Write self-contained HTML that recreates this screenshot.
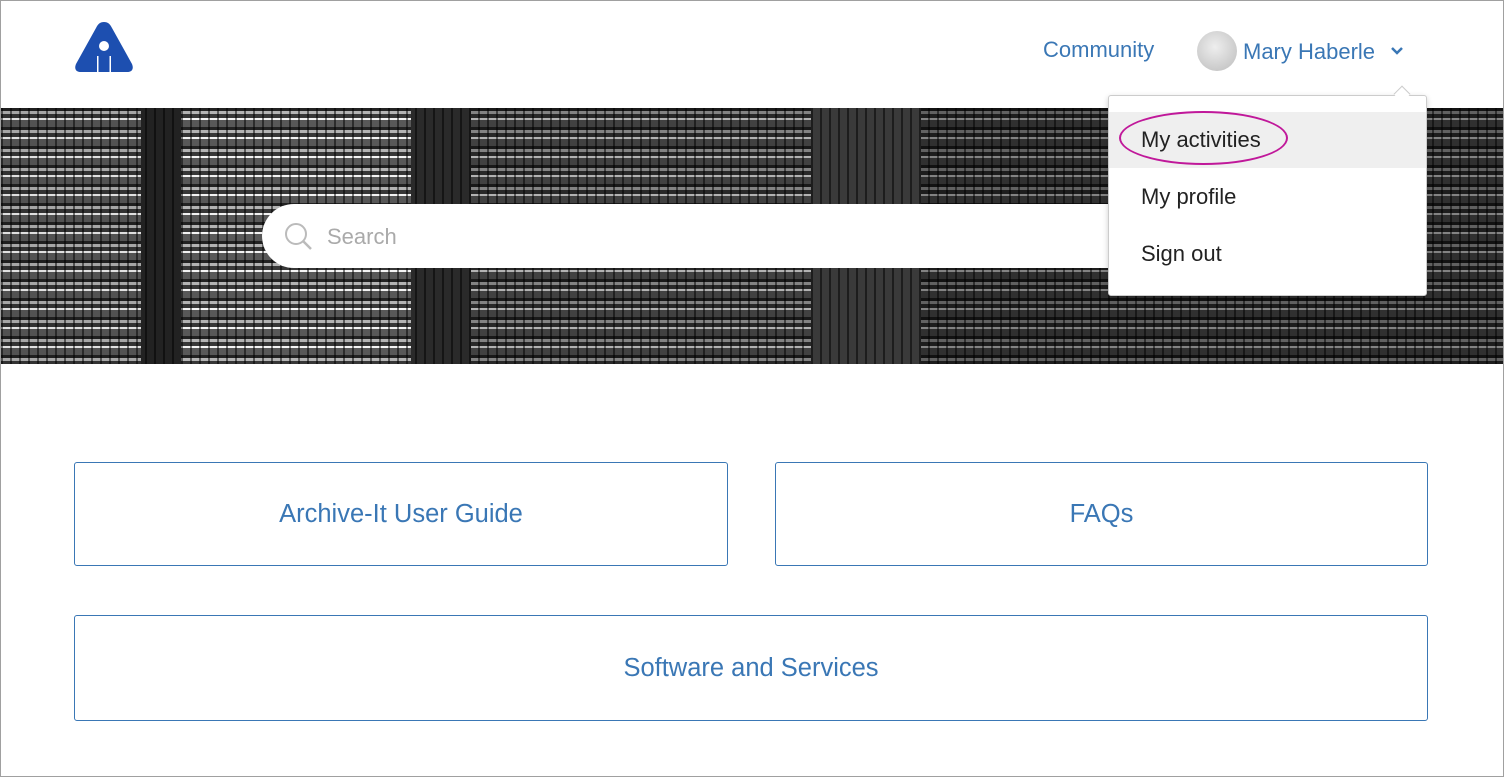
<!DOCTYPE html>
<html><head><style>
*{margin:0;padding:0;box-sizing:border-box}
body{width:1504px;height:777px;background:#fff;font-family:"Liberation Sans",Arial,sans-serif;position:relative;overflow:hidden}
.frame{position:absolute;left:0;top:0;width:1504px;height:777px;border:1px solid #a0a0a0;pointer-events:none;z-index:10}
.hero{position:absolute;left:1px;top:108px;width:1502px;height:256px;background:#333;overflow:hidden}
.col{position:absolute;top:0;height:256px}
.rows{background:repeating-linear-gradient(180deg,#1a1a1a 0 3px,#8a8a8a 3px 6px,#2a2a2a 6px 10px,#bbb 10px 12px,#444 12px 19px),#555}
.cells{background:repeating-linear-gradient(90deg,rgba(0,0,0,.5) 0 2px,transparent 2px 9px)}
.search{position:absolute;left:262px;top:204px;width:980px;height:64px;background:#fff;border-radius:32px 0 0 32px}
.search span{position:absolute;left:65px;top:20px;font-size:22px;color:#aaa}
.nav{position:absolute;top:37px;font-size:22px;color:#3a77b5}
.dd{position:absolute;left:1108px;top:95px;width:319px;height:201px;background:#fff;border:1px solid #ccc;border-radius:3px;box-shadow:0 2px 6px rgba(0,0,0,.2)}
.dd div{position:absolute;left:32px;font-size:22px;color:#222}
.btn{position:absolute;border:1px solid #3a77b5;border-radius:3px;color:#3a77b5;font-size:25.5px;display:flex;align-items:center;justify-content:center}
</style></head><body>
<svg style="position:absolute;left:74px;top:20px" width="60" height="53" viewBox="0 0 60 53"><path d="M30 2 C26 2 24 4 22 8 L2 44 C0 49 2 52 7 52 L53 52 C58 52 60 49 58 44 L38 8 C36 4 34 2 30 2Z" fill="#1d4fb0"/><circle cx="30" cy="26" r="5" fill="#fff"/><rect x="23" y="36" width="1.5" height="16" fill="#fff"/><rect x="35.5" y="36" width="1.5" height="16" fill="#fff"/></svg>
<div class="nav" style="left:1043px">Community</div>
<div style="position:absolute;left:1197px;top:31px;width:40px;height:40px;border-radius:50%;background:radial-gradient(circle at 45% 40%,#eee,#bbb)"></div>
<div class="nav" style="left:1243px;top:39px">Mary Haberle</div>
<svg style="position:absolute;left:1390px;top:46px" width="14" height="10"><path d="M2 2 L7 7 L12 2" stroke="#3a77b5" stroke-width="2.5" fill="none"/></svg>
<div class="hero">
<div class="col rows" style="left:0;width:140px;filter:brightness(1.2)"></div>
<div class="col" style="left:140px;width:40px;background:#222"></div>
<div class="col rows" style="left:180px;width:230px;filter:brightness(1.3)"></div>
<div class="col" style="left:410px;width:60px;background:#2a2a2a"></div>
<div class="col rows" style="left:470px;width:340px;filter:brightness(.95)"></div>
<div class="col" style="left:810px;width:110px;background:#3a3a3a"></div>
<div class="col rows" style="left:920px;width:590px;filter:brightness(.7)"></div>
<div class="col cells" style="left:0;width:1502px"></div>
</div>
<div class="search"><svg style="position:absolute;left:22px;top:18px" width="30" height="30"><circle cx="12" cy="12" r="10" stroke="#bbb" stroke-width="2" fill="none"/><path d="M19 19 L27 27" stroke="#bbb" stroke-width="2.5"/></svg><span>Search</span></div>
<div class="dd">
<div style="left:0;top:16px;width:317px;height:56px;background:#efefef"></div>
<div style="top:31px">My activities</div>
<div style="top:88px">My profile</div>
<div style="top:145px">Sign out</div>
</div>
<div style="position:absolute;left:1396px;top:88px;width:12px;height:12px;background:#fff;border-left:1px solid #ccc;border-top:1px solid #ccc;transform:rotate(45deg)"></div>
<div style="position:absolute;left:1119px;top:111px;width:169px;height:54px;border:2.5px solid #c0189a;border-radius:50%"></div>
<div class="btn" style="left:74px;top:462px;width:654px;height:104px">Archive-It User Guide</div>
<div class="btn" style="left:775px;top:462px;width:653px;height:104px">FAQs</div>
<div class="btn" style="left:74px;top:615px;width:1354px;height:106px">Software and Services</div>
<div class="frame"></div>
</body></html>
